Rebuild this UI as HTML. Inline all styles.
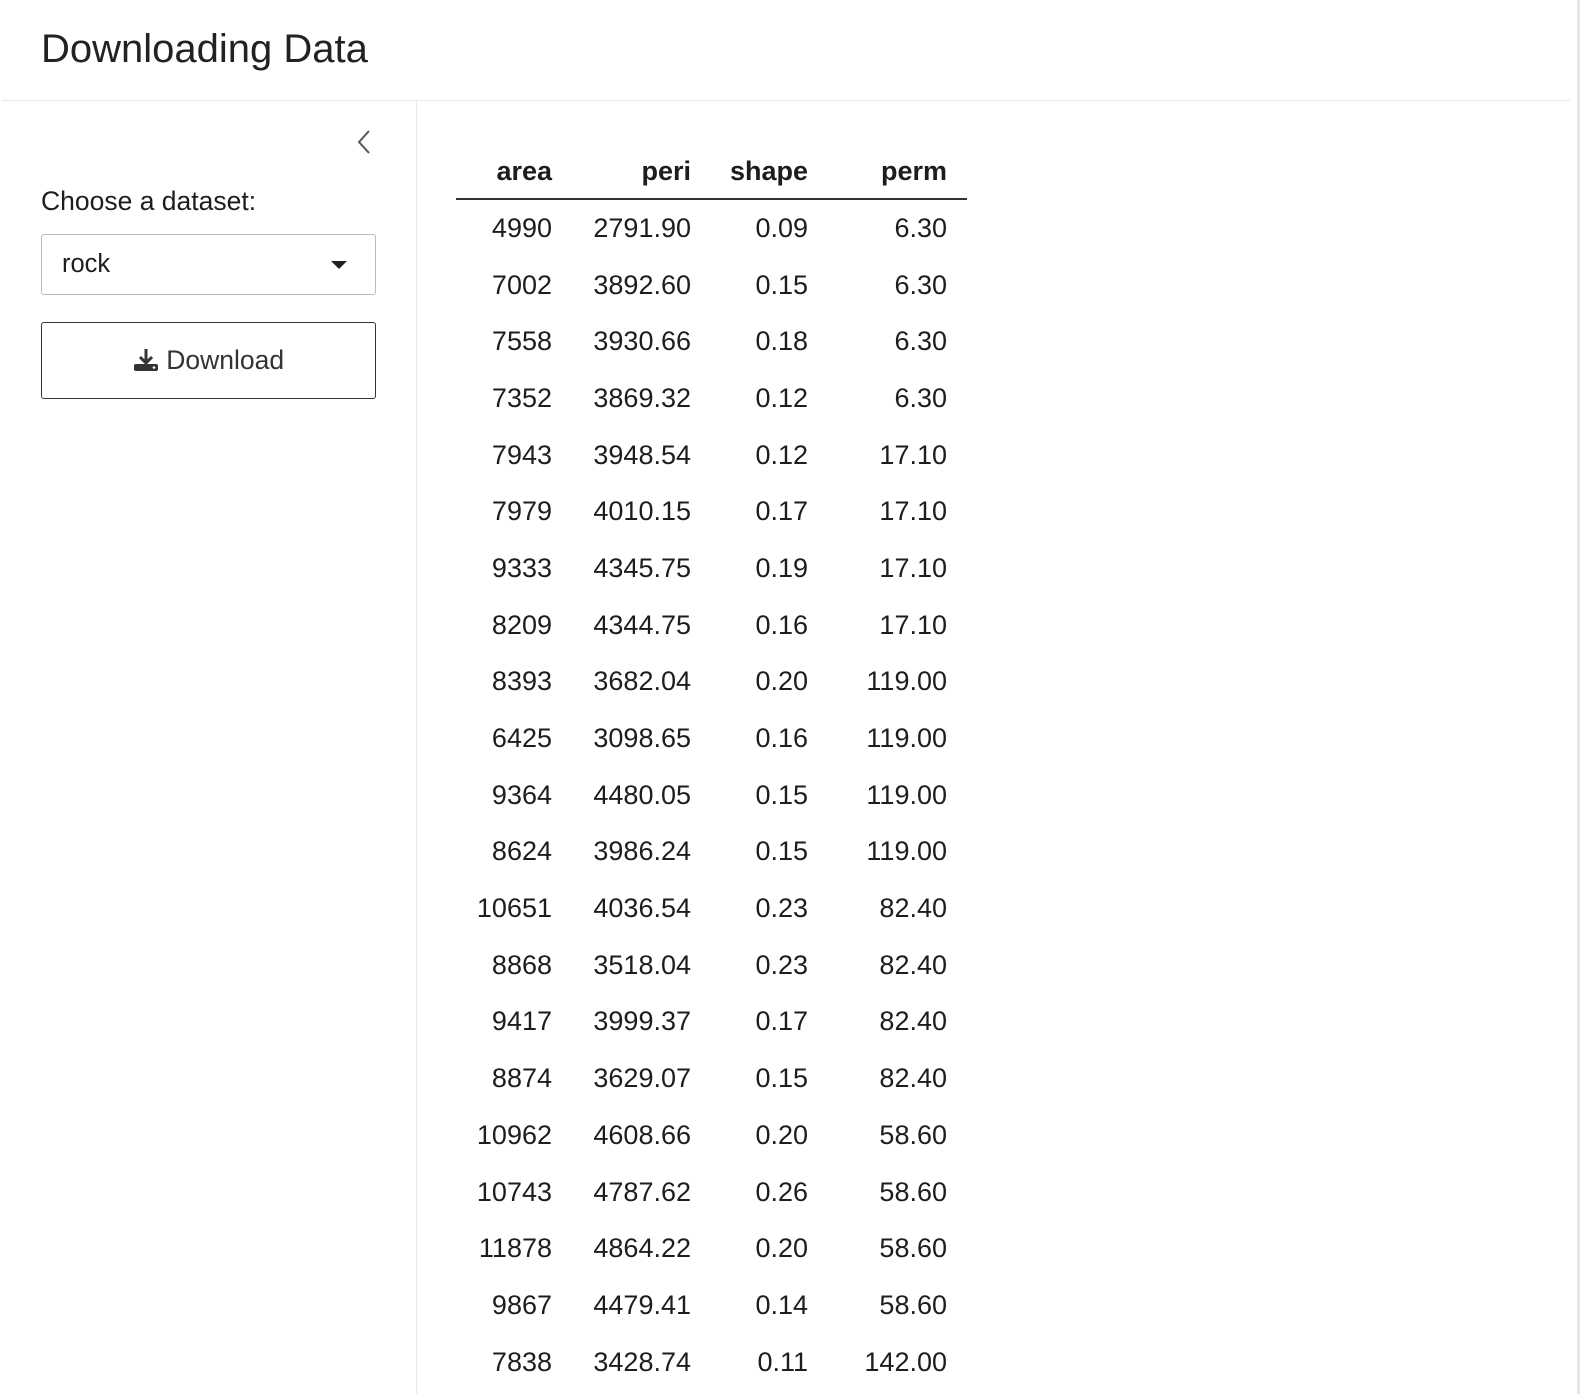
<!DOCTYPE html>
<html><head><style>
body{margin:0;width:1580px;height:1394px;overflow:hidden;background:#fff;font-family:"Liberation Sans",sans-serif;color:#1d1d1d;position:relative}
.h1{position:absolute;left:41px;top:27px;font-size:40px;font-weight:300;color:#222;letter-spacing:0px}
.hline{position:absolute;left:2px;top:100px;width:1568px;height:1px;background:#e8e8e8}
.vline{position:absolute;left:416px;top:101px;width:1px;height:1293px;background:#e8e8e8}
.redge{position:absolute;left:1577px;top:0;width:3px;height:1394px;background:#e6e6e6}
.chev{position:absolute;left:355px;top:129px}
.lbl{position:absolute;left:41px;top:186px;font-size:26.5px}
.sel{position:absolute;left:41px;top:234px;width:333px;height:59px;border:1px solid #bbb;border-radius:3px}
.sel span{position:absolute;left:20px;top:15px;font-size:25.5px}
.sel i{position:absolute;right:28px;top:26px;border-left:8px solid transparent;border-right:8px solid transparent;border-top:8px solid #222}
.btn{position:absolute;left:41px;top:322px;width:333px;height:75px;border:1px solid #333;border-radius:3px}
.btn div{position:absolute;left:0;right:0;top:22px;text-align:center;font-size:26.5px;color:#333}
table{position:absolute;left:456px;top:146px;border-collapse:collapse;font-size:27px}
th,td{text-align:right;padding:0;height:56.7px}
th{font-weight:bold;height:50px;border-bottom:2px solid #333;vertical-align:middle;padding-bottom:2px}
</style></head><body>
<div class="h1">Downloading Data</div>
<div class="hline"></div><div class="vline"></div><div class="redge"></div>
<svg class="chev" width="20" height="26"><path d="M14 2 L4 13 L14 24" fill="none" stroke="#555" stroke-width="2"/></svg>
<div class="lbl">Choose a dataset:</div>
<div class="sel"><span>rock</span><i></i></div>
<div class="btn"><div><svg width="26" height="24" viewBox="0 0 26 24" style="vertical-align:-3px"><path d="M13 1v13M7 9l6 6 6-6" stroke="#333" stroke-width="3" fill="none"/><rect x="1" y="16" width="24" height="7" rx="2" fill="#333"/><circle cx="21" cy="19.5" r="1.3" fill="#fff"/></svg> Download</div></div>
<table>
<colgroup><col style="width:96px"><col style="width:139px"><col style="width:117px"><col style="width:139px"><col style="width:20px"></colgroup>
<tr><th>area</th><th>peri</th><th>shape</th><th>perm</th><th></th></tr>
<tr><td>4990</td><td>2791.90</td><td>0.09</td><td>6.30</td><td></td></tr>
<tr><td>7002</td><td>3892.60</td><td>0.15</td><td>6.30</td><td></td></tr>
<tr><td>7558</td><td>3930.66</td><td>0.18</td><td>6.30</td><td></td></tr>
<tr><td>7352</td><td>3869.32</td><td>0.12</td><td>6.30</td><td></td></tr>
<tr><td>7943</td><td>3948.54</td><td>0.12</td><td>17.10</td><td></td></tr>
<tr><td>7979</td><td>4010.15</td><td>0.17</td><td>17.10</td><td></td></tr>
<tr><td>9333</td><td>4345.75</td><td>0.19</td><td>17.10</td><td></td></tr>
<tr><td>8209</td><td>4344.75</td><td>0.16</td><td>17.10</td><td></td></tr>
<tr><td>8393</td><td>3682.04</td><td>0.20</td><td>119.00</td><td></td></tr>
<tr><td>6425</td><td>3098.65</td><td>0.16</td><td>119.00</td><td></td></tr>
<tr><td>9364</td><td>4480.05</td><td>0.15</td><td>119.00</td><td></td></tr>
<tr><td>8624</td><td>3986.24</td><td>0.15</td><td>119.00</td><td></td></tr>
<tr><td>10651</td><td>4036.54</td><td>0.23</td><td>82.40</td><td></td></tr>
<tr><td>8868</td><td>3518.04</td><td>0.23</td><td>82.40</td><td></td></tr>
<tr><td>9417</td><td>3999.37</td><td>0.17</td><td>82.40</td><td></td></tr>
<tr><td>8874</td><td>3629.07</td><td>0.15</td><td>82.40</td><td></td></tr>
<tr><td>10962</td><td>4608.66</td><td>0.20</td><td>58.60</td><td></td></tr>
<tr><td>10743</td><td>4787.62</td><td>0.26</td><td>58.60</td><td></td></tr>
<tr><td>11878</td><td>4864.22</td><td>0.20</td><td>58.60</td><td></td></tr>
<tr><td>9867</td><td>4479.41</td><td>0.14</td><td>58.60</td><td></td></tr>
<tr><td>7838</td><td>3428.74</td><td>0.11</td><td>142.00</td><td></td></tr>
</table>
</body></html>
